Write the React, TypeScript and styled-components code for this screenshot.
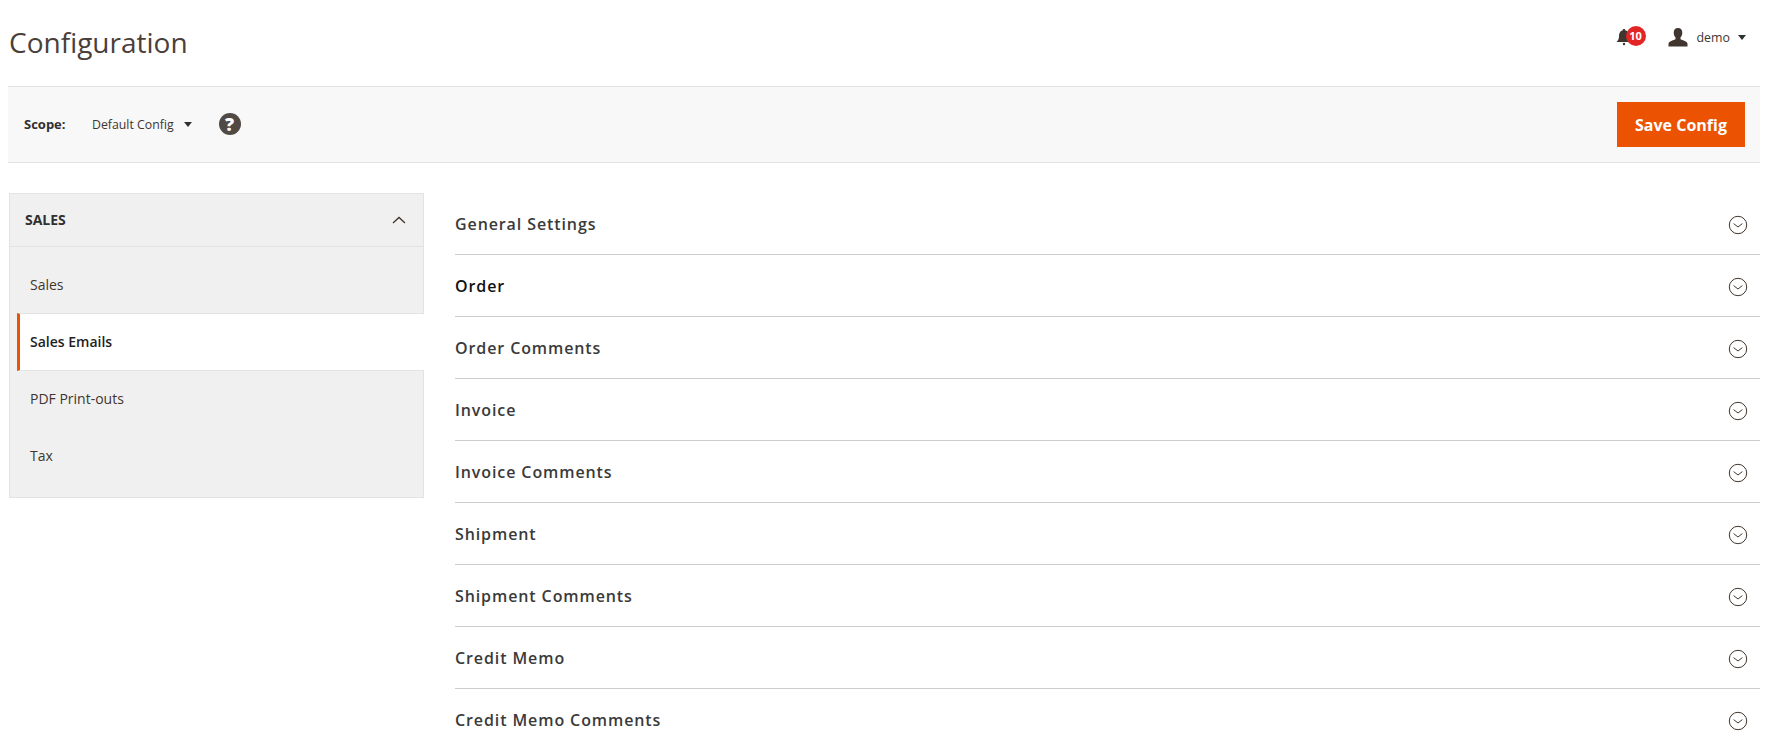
import React from "react";
import styled, { createGlobalStyle } from "styled-components";

const Global = createGlobalStyle`
  html, body { margin: 0; padding: 0; background: #fff; height: 100%; overflow: hidden; }
  body { font-family: "Open Sans", "Liberation Sans", sans-serif; color: #303030; }
  * { box-sizing: border-box; }
`;

const Page = styled.div`
  padding: 0 9px 0 8px;
  height: 753px;
  overflow: hidden;
`;
const TopBar = styled.header`
  height: 86px;
  display: flex;
  align-items: flex-start;
  justify-content: space-between;
`;
const Title = styled.h1`
  margin: 23px 0 0 1px;
  font-size: 28px;
  line-height: 38px;
  font-weight: 400;
  color: #4a403a;
`;
const Actions = styled.div`
  display: flex;
  align-items: center;
  margin-top: 27px;
  padding-right: 14px;
`;
const Bell = styled.div`
  position: relative;
  width: 20px;
  height: 20px;
  margin-right: 33px;
  color: #41362f;
`;
const Badge = styled.span`
  position: absolute;
  left: 11px;
  top: -1px;
  min-width: 20px;
  height: 20px;
  border-radius: 10px;
  background: #e22626;
  color: #fff;
  font-size: 11px;
  font-weight: 700;
  line-height: 20px;
  text-align: center;
`;
const UserName = styled.span`
  font-size: 12.4px;
  color: #41362f;
  margin-left: 9px;
`;
const Caret = styled.span`
  display: inline-block;
  width: 0;
  height: 0;
  border-left: 4px solid transparent;
  border-right: 4px solid transparent;
  border-top: 5px solid #303030;
`;
const UserCaret = styled(Caret)`
  margin-left: 8px;
`;
const ScopeBar = styled.section`
  height: 77px;
  background: #f8f8f8;
  border-top: 1px solid #e3e3e3;
  border-bottom: 1px solid #e3e3e3;
  display: flex;
  align-items: center;
  justify-content: space-between;
  padding: 0 15px 0 16px;
`;
const ScopeGroup = styled.div`
  display: flex;
  align-items: center;
  margin-top: -1px;
`;
const ScopeLabel = styled.span`
  font-size: 13px;
  font-weight: 700;
  color: #303030;
  width: 68px;
`;
const ScopeValue = styled.span`
  font-size: 12.3px;
  color: #41362f;
  margin-right: 10px;
`;
const Help = styled.span`
  width: 22px;
  height: 22px;
  border-radius: 50%;
  background: #514943;
  color: #fff;
  font-size: 18px;
  font-weight: 800;
  line-height: 22px;
  text-align: center;
  margin-left: 27px;
`;
const SaveButton = styled.button`
  width: 128px;
  height: 45px;
  border: none;
  background: #eb5202;
  color: #fff;
  font-family: inherit;
  font-size: 16px;
  font-weight: 700;
  padding: 0;
`;
const Main = styled.div`
  display: grid;
  grid-template-columns: 416px 1fr;
  column-gap: 31px;
  padding-top: 30px;
`;
const Sidebar = styled.nav`
  align-self: start;
  background: #f0f0f0;
  border: 1px solid #e3e3e3;
  height: 305px;
  margin-left: 1px;
  width: 415px;
`;
const SideHead = styled.div`
  height: 53px;
  display: flex;
  align-items: center;
  justify-content: space-between;
  padding: 0 17px 1px 15px;
  border-bottom: 1px solid #e3e3e3;
  font-size: 14px;
  font-weight: 700;
  color: #303030;
`;
const SideList = styled.ul`
  list-style: none;
  margin: 0;
  padding: 0;
`;
const SideItem = styled.li<{ $active?: boolean; $h: number; $pt: number }>`
  height: ${(p) => p.$h}px;
  padding: ${(p) => p.$pt}px 0 0 20px;
  font-size: 14px;
  line-height: 18px;
  color: ${(p) => (p.$active ? "#1f1f1f" : "#41362f")};
  font-weight: ${(p) => (p.$active ? 600 : 400)};
  ${(p) =>
    p.$active
      ? `background:#fff;
         margin-left:7px;
         margin-right:-1px;
         padding-left:10px;
         border-left:3px solid #eb5202;
         border-top:1px solid #e3e3e3;
         border-bottom:1px solid #e3e3e3;
         padding-top:${p.$pt - 1}px;`
      : ""}
`;
const Sections = styled.div`
  display: flex;
  flex-direction: column;
`;
const Row = styled.div<{ $last?: boolean }>`
  height: 62px;
  display: flex;
  align-items: center;
  justify-content: space-between;
  border-bottom: ${(p) => (p.$last ? "none" : "1px solid #cccccc")};
  padding: 0 12px 0 0;
`;
const RowTitle = styled.span<{ $strong?: boolean }>`
  font-size: 16px;
  font-weight: 600;
  letter-spacing: 0.9px;
  color: ${(p) => (p.$strong ? "#111" : "#3a3a3a")};
`;
const RowIcon = styled.svg`
  margin-top: 2px;
`;

const ChevronCircle = () => (
  <RowIcon width="20" height="20" viewBox="0 0 20 20" fill="none" stroke="#41362f" strokeWidth="1">
    <circle cx="10" cy="10" r="8.7" />
    <path d="M5.6 8.6 L10 12 L14.4 8.6" />
  </RowIcon>
);

const rows = [
  "General Settings",
  "Order",
  "Order Comments",
  "Invoice",
  "Invoice Comments",
  "Shipment",
  "Shipment Comments",
  "Credit Memo",
  "Credit Memo Comments",
];

export default function App() {
  return (
    <Page>
      <Global />
      <TopBar>
        <Title>Configuration</Title>
        <Actions>
          <Bell>
            <svg width="18" height="20" viewBox="0 0 16 20" fill="currentColor">
              <path d="M8 2c.8 0 1.3.5 1.3 1.2C12 4 13 6.200 13 9c0 3 .8 4.500 2.500 6H.5C2.200 13.500 3 12 3 9c0-2.800 1-5 3.700-5.800C6.700 2.500 7.200 2 8 2z" />
              <circle cx="8" cy="17" r="1.200" />
            </svg>
            <Badge>10</Badge>
          </Bell>
          <svg width="20" height="19" viewBox="0 0 20 19" fill="#41362f">
            <path d="M10 0c2.800 0 4.300 2 4.300 4.800 0 2-.8 3.700-1.800 4.800v1.600c1.500 1 6 1.500 7 4.300V18.500H.5V15.500c1-2.800 5.500-3.300 7-4.300V9.600C6.500 8.500 5.700 6.800 5.700 4.800 5.700 2 7.200 0 10 0z" />
          </svg>
          <UserName>demo</UserName>
          <UserCaret />
        </Actions>
      </TopBar>
      <ScopeBar>
        <ScopeGroup>
          <ScopeLabel>Scope:</ScopeLabel>
          <ScopeValue>Default Config</ScopeValue>
          <Caret />
          <Help>?</Help>
        </ScopeGroup>
        <SaveButton>Save Config</SaveButton>
      </ScopeBar>
      <Main>
        <Sidebar>
          <SideHead>
            SALES
            <svg width="14" height="8" viewBox="0 0 14 8" fill="none" stroke="#41362f" strokeWidth="1.300">
              <path d="M1 7 L7 1.500 L13 7" />
            </svg>
          </SideHead>
          <SideList>
            <SideItem $h={66} $pt={29}>Sales</SideItem>
            <SideItem $active $h={58} $pt={20}>Sales Emails</SideItem>
            <SideItem $h={57} $pt={19}>PDF Print-outs</SideItem>
            <SideItem $h={57} $pt={19}>Tax</SideItem>
          </SideList>
        </Sidebar>
        <Sections>
          {rows.map((r, i) => (
            <Row key={r} $last={i === rows.length - 1}>
              <RowTitle $strong={r === "Order"}>{r}</RowTitle>
              <ChevronCircle />
            </Row>
          ))}
        </Sections>
      </Main>
    </Page>
  );
}
